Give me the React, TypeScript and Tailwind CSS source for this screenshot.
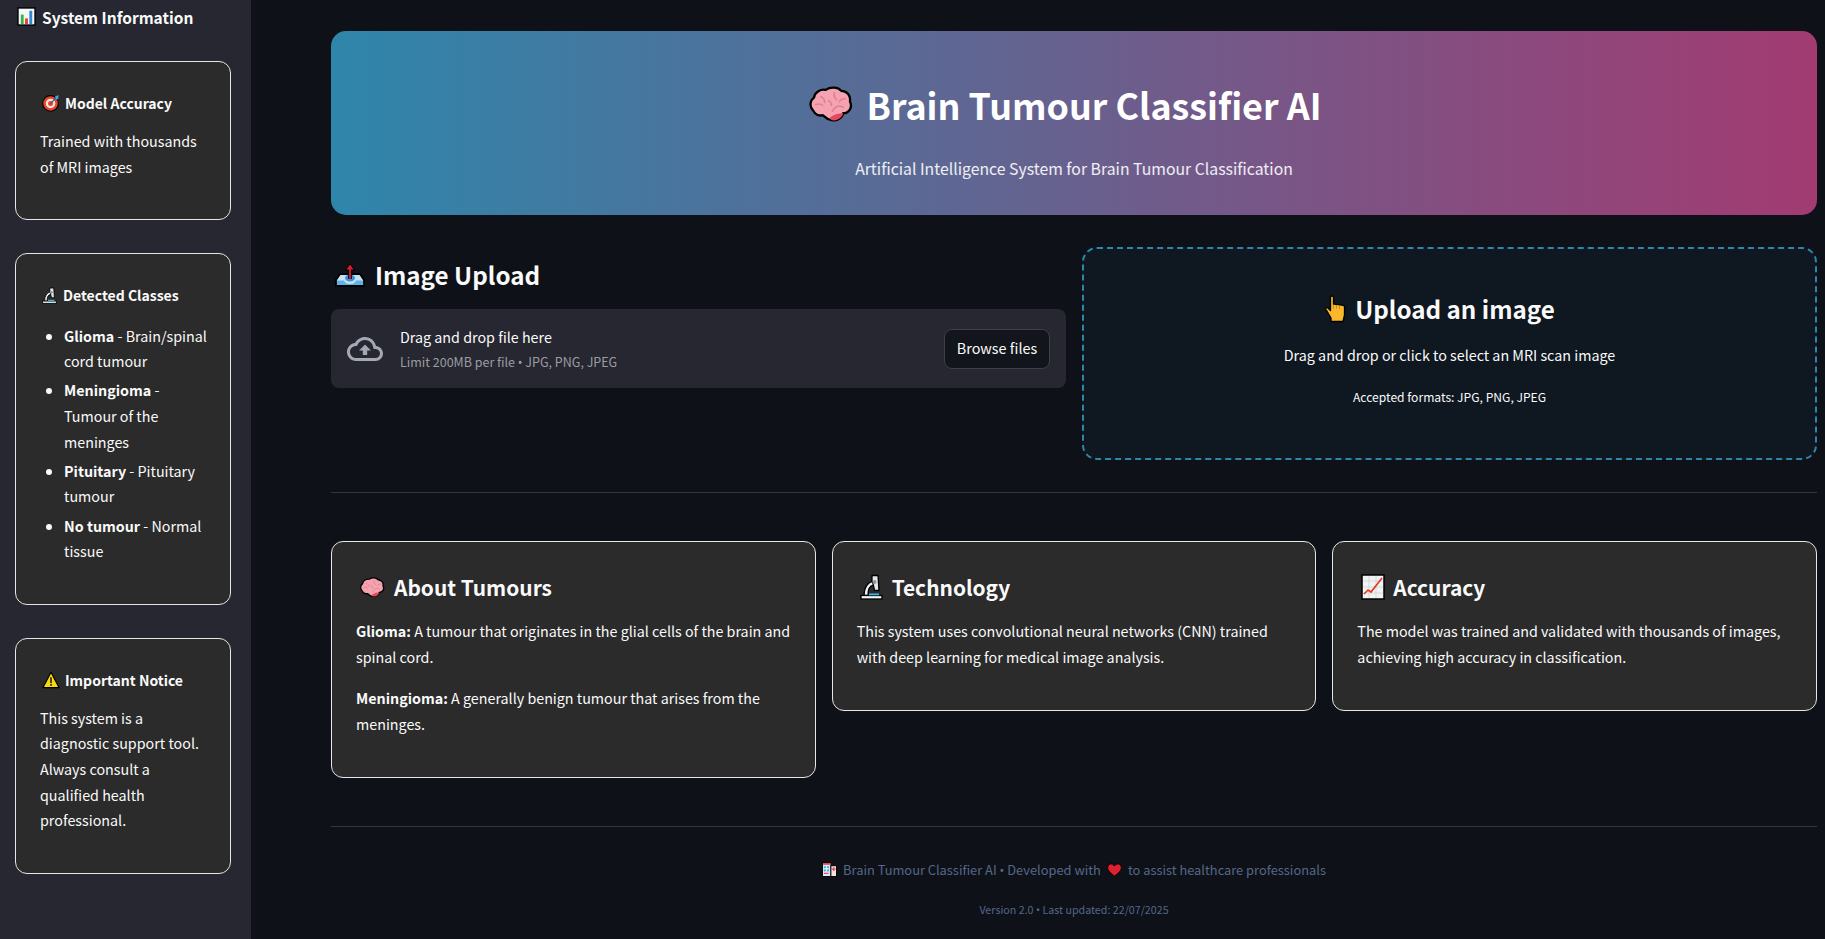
import React from "react";

const font = { fontFamily: '"Noto Sans CJK SC", "Noto Sans", sans-serif' };

const BarChartEmoji = ({ className }: { className?: string }) => (
  <svg viewBox="0 0 20 20" className={className}>
    <rect x="1" y="1" width="18" height="18" fill="#f4f6f8" stroke="#000" strokeWidth="1.5" />
    <rect x="4" y="8" width="3" height="10" fill="#35b34a" />
    <rect x="8.5" y="12" width="3" height="6" fill="#e8402f" />
    <rect x="13" y="4" width="3" height="14" fill="#2f88d8" />
  </svg>
);

const TargetEmoji = ({ className }: { className?: string }) => (
  <svg viewBox="0 0 20 20" className={className}>
    <circle cx="9.5" cy="10.5" r="8.7" fill="#e8442c" stroke="#000" strokeWidth="1.2" />
    <circle cx="9.5" cy="10.5" r="5.3" fill="#f6e6e0" />
    <circle cx="9.5" cy="10.5" r="2.8" fill="#e8442c" />
    <path d="M9.5 10.5 16 4" stroke="#2a5f86" strokeWidth="1.3" />
    <path d="M14.5 2.5 18.5 1.5 18 5.5 15.5 6.5Z" fill="#33a9e6" />
  </svg>
);

const MicroscopeEmoji = ({ className }: { className?: string }) => (
  <svg viewBox="0 0 23 26" className={className}>
    <path d="M13 7C7 9 4 14 4 21.5h4C8 15 9 12 14 11z" fill="#eef2f4" stroke="#000" strokeWidth="1.3" />
    <path d="M12 1.5h6l1 15h-4.5l-1.5-7-1-2z" fill="#e3e7ea" stroke="#000" strokeWidth="1.3" strokeLinejoin="round" />
    <circle cx="14.5" cy="8" r="2" fill="#8b979e" />
    <rect x="1" y="21.5" width="21" height="3.5" fill="#f2f5f6" stroke="#000" strokeWidth="1.3" />
    <rect x="9" y="19.5" width="10" height="1.8" fill="#43b8e8" />
  </svg>
);

const WarningEmoji = ({ className }: { className?: string }) => (
  <svg viewBox="0 0 20 20" className={className}>
    <path d="M10 1.5 19 18.5H1Z" fill="#f8d90f" stroke="#000" strokeWidth="1.3" strokeLinejoin="round" />
    <rect x="9" y="7" width="2" height="6.5" fill="#3a3a20" />
    <rect x="9" y="14.5" width="2" height="2" fill="#3a3a20" />
  </svg>
);

const BrainEmoji = ({ className }: { className?: string }) => (
  <svg viewBox="0 0 46 38" className={className}>
    <path
      d="M5 25C1 21 2 15 6 12 7 6 13 3 18 4 23 .5 31 1 34 5 40 5 44 10 43 16 46 22 42 28 36 28 35 33 29 36.5 24 35 19 35 17 31 15 30 11 31 7 29 5 25Z"
      fill="#f5a3b0"
      stroke="#000"
      strokeWidth="2.4"
      strokeLinejoin="round"
    />
    <path d="M24 35C29 36.5 35 33 36 28 32 28 26 29 22 33Z" fill="#e8485f" />
    <path
      d="M13 11c3 1 4 3 4 6M8 19c3-1 5-1 7 1M27 7c-1 3 0 5 2 7M38 13c-3 0-5 1-6 3M36 22c-4-3-9-1-11 4M21 15c2 1 3 3 3 5"
      fill="none"
      stroke="#e0808f"
      strokeWidth="1.6"
      strokeLinecap="round"
    />
  </svg>
);

const OutboxEmoji = ({ className }: { className?: string }) => (
  <svg viewBox="0 0 30 24" className={className}>
    <path d="M5 11h20l4 6v6H1v-6z" fill="#c5e2f5" stroke="#000" strokeWidth="1.8" strokeLinejoin="round" />
    <path d="M2 17.5h7c1 2.5 3 3.5 6 3.5s5-1 6-3.5h7V22H2z" fill="#5db3e8" />
    <ellipse cx="15" cy="15" rx="5" ry="3.5" fill="#3f8fd8" />
    <path d="M15 16V5" stroke="#000" strokeWidth="3.6" />
    <path d="M15 .8 10.5 7h9z" fill="#dc1a2b" stroke="#000" strokeWidth="1" strokeLinejoin="round" />
    <path d="M15 16V6" stroke="#dc1a2b" strokeWidth="1.8" />
  </svg>
);

const HandEmoji = ({ className }: { className?: string }) => (
  <svg viewBox="0 0 21 28" className={className}>
    <path
      d="M5.5 2c0-1.3 3-1.3 3 0v7.5c1-.6 2-.5 3 .2 1-.5 2-.4 3 .3 1.5-.4 4.5.5 5 1.5v8.5l-1.5 6.5H6v-3.5L1 14.5c-.8-1.5.8-2.6 2-1.5l2.5 2.5z"
      fill="#fbb82a"
      stroke="#000"
      strokeWidth="1.3"
      strokeLinejoin="round"
    />
    <path d="M8.5 9.5v4M11.5 10v3.5M14.5 10.5V14" stroke="#c9820e" strokeWidth=".9" fill="none" />
  </svg>
);

const ChartUpEmoji = ({ className }: { className?: string }) => (
  <svg viewBox="0 0 24 26" className={className}>
    <rect x="1" y="1" width="22" height="24" fill="#f1f3f3" stroke="#000" strokeWidth="1.5" />
    <path d="M2 7h20M2 13h20M2 19h20M8 2v22M15 2v22" stroke="#c9cfd2" strokeWidth=".7" />
    <path d="M3 20l4-4 3 2L21 4" fill="none" stroke="#e63a20" strokeWidth="1.7" />
  </svg>
);

const HospitalEmoji = ({ className }: { className?: string }) => (
  <svg viewBox="0 0 16 16" className={className}>
    <rect x=".5" y=".5" width="9" height="15" fill="#d7eef8" stroke="#000" />
    <rect x="9.5" y="4" width="6" height="11.5" fill="#f2e3df" stroke="#000" />
    <rect x="1" y="1" width="8" height="2" fill="#e8404a" />
    <rect x="2" y="4.5" width="2" height="2" fill="#37a7e3" />
    <rect x="5.5" y="4.5" width="2" height="2" fill="#37a7e3" />
    <rect x="2" y="8" width="2" height="2" fill="#37a7e3" />
    <rect x="5.5" y="8" width="2" height="2" fill="#37a7e3" />
    <rect x="2" y="11.5" width="5" height="1.2" fill="#e8404a" />
    <path d="M12.5 5.5v4M10.5 7.5h4" stroke="#e8404a" strokeWidth="1.3" />
  </svg>
);

const HeartEmoji = ({ className }: { className?: string }) => (
  <svg viewBox="0 0 16 15" className={className}>
    <path
      d="M8 14C3.5 10.5.7 8 .7 4.8.7 2.5 2.4 1 4.3 1 5.8 1 7.2 1.8 8 3.3 8.8 1.8 10.2 1 11.7 1c1.9 0 3.6 1.5 3.6 3.8C15.3 8 12.5 10.5 8 14Z"
      fill="#e0202f"
      stroke="#000"
      strokeWidth=".9"
    />
  </svg>
);

const UploadCloud = ({ className }: { className?: string }) => (
  <svg viewBox="0 0 24 24" fill="currentColor" className={className}>
    <path d="M19.35 10.04C18.67 6.59 15.64 4 12 4 9.11 4 6.6 5.64 5.35 8.04 2.34 8.36 0 10.91 0 14c0 3.31 2.69 6 6 6h13c2.76 0 5-2.24 5-5 0-2.64-2.05-4.78-4.65-4.96zM19 18H6c-2.21 0-4-1.79-4-4 0-2.05 1.53-3.76 3.56-3.97l1.07-.11.5-.95C8.08 7.14 9.94 6 12 6c2.62 0 4.88 1.86 5.39 4.43l.3 1.5 1.53.11c1.56.1 2.78 1.41 2.78 2.96 0 1.65-1.35 3-3 3zM8 13h2.55v3h2.9v-3H16l-4-4z" />
  </svg>
);

// the CJK font draws a full-width bullet, so borrow a latin one
const Dot = () => <span className="font-['Noto_Sans']">•</span>;

const SideCard = ({ icon, title, children }: { icon: React.ReactNode; title: string; children: React.ReactNode }) => (
  <div className="rounded-[12px] border border-[#e6e6e6] bg-[#2b2b2b] p-6">
    <h4 className="mb-[15px] flex items-center pt-[7px] pl-[2px] text-[14px] leading-[20px] font-semibold">
      {icon}
      {title}
    </h4>
    {children}
  </div>
);

const InfoCard = ({ icon, title, children }: { icon: React.ReactNode; title: string; children: React.ReactNode }) => (
  <div className="self-start rounded-[12px] border border-[#e6e6e6] bg-[#2b2b2b] px-6 pt-6 pb-[25px]">
    <h3 className="mt-[6px] mb-[16px] flex h-[30px] items-center pl-[3px] text-[20.9px] leading-[30px] font-semibold">
      {icon}
      {title}
    </h3>
    {children}
  </div>
);

const App = () => {
  return (
    <div style={font} className="flex h-[939px] w-[1825px] overflow-hidden bg-[#0e1117] text-[14.3px] leading-[25.6px] text-[#fafafa]">
      {/* Sidebar */}
      <aside className="w-[251px] shrink-0 bg-[#262730] pr-5 pl-[15px]">
        <h3 className="flex h-[33px] items-center pl-[2px] text-[15.5px] leading-[24px] font-semibold">
          <BarChartEmoji className="mr-[6px] h-[19px] w-[19px]" />
          System Information
        </h3>
        <div className="mt-[28px] flex flex-col gap-[33px]">
          <SideCard icon={<TargetEmoji className="mr-[5px] h-[18px] w-[18px]" />} title="Model Accuracy">
            <p className="mb-4">Trained with thousands of MRI images</p>
          </SideCard>
          <SideCard icon={<MicroscopeEmoji className="mr-[6px] h-[17px] w-[15px]" />} title="Detected Classes">
            <ul className="-mr-2 mb-4 list-disc pt-[2.5px] pl-6">
              <li className="mb-[3.6px]"><b className="font-semibold">Glioma</b> - Brain/spinal cord tumour</li>
              <li className="mb-[3.6px]"><b className="font-semibold">Meningioma</b> -<br />Tumour of the meninges</li>
              <li className="mb-[3.6px]"><b className="font-semibold">Pituitary</b> - Pituitary tumour</li>
              <li><b className="font-semibold">No tumour</b> - Normal tissue</li>
            </ul>
          </SideCard>
          <SideCard icon={<WarningEmoji className="mr-[5px] h-[18px] w-[18px]" />} title="Important Notice">
            <p className="mb-4">This system is a diagnostic support tool. Always consult a qualified health professional.</p>
          </SideCard>
        </div>
      </aside>

      {/* Main */}
      <main className="min-w-0 flex-1 pt-[31px] pr-2 pl-20">
        <div className="flex h-[184px] flex-col items-center rounded-[15px] bg-linear-to-r/srgb from-[#2e86ab] to-[#a23b72]">
          <h1 className="mt-[49px] mr-[19px] flex h-[48px] items-center text-[35.85px] leading-[48px] font-bold text-white">
            <BrainEmoji className="mr-[14px] h-[37px] w-[45px]" />
            Brain Tumour Classifier AI
          </h1>
          <p className="mt-[27px] text-[15.8px] leading-[28px] text-white/90">Artificial Intelligence System for Brain Tumour Classification</p>
        </div>

        <div className="mt-[32px] grid grid-cols-2 gap-4">
          <div>
            <h3 className="mt-[11px] mb-[17px] flex h-[34px] items-center pl-1 text-[24.2px] leading-[34px] font-semibold">
              <OutboxEmoji className="mr-[10px] h-[24px] w-[30px]" />
              Image Upload
            </h3>
            <div className="flex h-[79px] items-center rounded-lg bg-[#262730] px-4">
              <UploadCloud className="h-[36px] w-[36px] text-[#a3a8b4]" />
              <div className="ml-[17px] flex-1 pt-[2px]">
                <div className="leading-[25px]">Drag and drop file here</div>
                <div className="text-[12.5px] leading-[25px] text-[#9b9ca3]">Limit 200MB per file <Dot /> JPG, PNG, JPEG</div>
              </div>
              <button className="h-[40px] w-[106px] rounded-lg border border-[#3d3f49] bg-[#13151c] pb-[2px] text-[14.4px] leading-[24px]">Browse files</button>
            </div>
          </div>
          <div className="flex h-[213px] flex-col items-center rounded-[15px] border-2 border-dashed border-[#2e86ab] bg-[#0f1720]">
            <h3 className="mt-[43px] mr-[19px] flex h-[34px] items-center text-[24.2px] leading-[34px] font-semibold">
              <HandEmoji className="mr-[9px] h-[28px] w-[21px]" />
              Upload an image
            </h3>
            <p className="mt-[16px]">Drag and drop or click to select an MRI scan image</p>
            <p className="mt-[18px] text-[12.1px] leading-[22px]">Accepted formats: JPG, PNG, JPEG</p>
          </div>
        </div>

        <hr className="mt-[32px] border-t border-[#33363d]" />

        <div className="mt-[48px] grid grid-cols-3 gap-4">
          <InfoCard icon={<BrainEmoji className="mr-[9px] h-[21px] w-[26px]" />} title="About Tumours">
            <p className="mb-4"><b className="font-semibold">Glioma:</b> A tumour that originates in the glial cells of the brain and spinal cord.</p>
            <p className="mb-4"><b className="font-semibold">Meningioma:</b> A generally benign tumour that arises from the meninges.</p>
          </InfoCard>
          <InfoCard icon={<MicroscopeEmoji className="mr-[9px] h-[26px] w-[23px]" />} title="Technology">
            <p className="mb-4">This system uses convolutional neural networks (CNN) trained with deep learning for medical image analysis.</p>
          </InfoCard>
          <InfoCard icon={<ChartUpEmoji className="mr-[8px] ml-[1px] h-[26px] w-[24px]" />} title="Accuracy">
            <p className="mb-4">The model was trained and validated with thousands of images, achieving high accuracy in classification.</p>
          </InfoCard>
        </div>

        <hr className="mt-[48px] border-t border-[#33363d]" />

        <div className="mt-[30px] flex flex-col items-center text-[#55688a]">
          <div className="flex h-[25px] items-center text-[12.85px]">
            <HospitalEmoji className="mr-[6px] h-[15px] w-[15px]" />
            <span>Brain Tumour Classifier AI <Dot /> Developed with</span>
            <HeartEmoji className="mx-[6px] h-[14px] w-[15px]" />
            to assist healthcare professionals
          </div>
          <div className="mt-[18px] text-[10.7px] leading-[20px]">Version 2.0 <Dot /> Last updated: 22/07/2025</div>
        </div>
      </main>
    </div>
  );
};

export default App;
